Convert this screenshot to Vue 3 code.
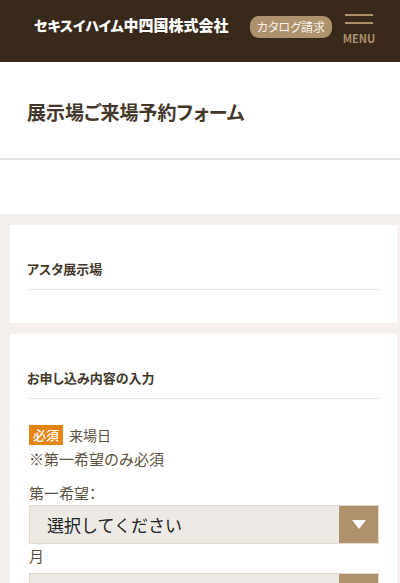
<script setup>
import { ref } from 'vue'

const month = ref('')
const day = ref('')
const months = Array.from({ length: 12 }, (_, i) => i + 1)
const days = Array.from({ length: 31 }, (_, i) => i + 1)
</script>

<template>
  <div class="page">
    <header class="header">
      <a class="logo" href="#"><span class="brand">セキスイハイム</span>中四国株式会社</a>
      <nav class="actions">
        <a class="catalog" href="#">カタログ請求</a>
        <button class="menu" type="button">
          <span class="bar"></span>
          <span class="bar"></span>
          <span class="menu-text">MENU</span>
        </button>
      </nav>
    </header>

    <div class="title">
      <h1>展示場ご来場予約フォーム</h1>
    </div>

    <main class="content">
      <section class="card">
        <h2>アスタ展示場</h2>
      </section>

      <section class="card">
        <h2>お申し込み内容の入力</h2>
        <form class="form">
          <p class="field-name"><span class="required">必須</span>来場日</p>
          <p class="note">※第一希望のみ必須</p>
          <label class="choice" for="month">第一希望：</label>
          <div class="select">
            <select id="month" v-model="month">
              <option value="">選択してください</option>
              <option v-for="m in months" :key="m" :value="m">{{ m }}</option>
            </select>
            <span class="arrow"><svg viewBox="0 0 14 9"><path d="M0 0h14L7 9z" /></svg></span>
          </div>
          <label class="unit" for="month">月</label>
          <div class="select">
            <select id="day" v-model="day" aria-label="日">
              <option value="">選択してください</option>
              <option v-for="d in days" :key="d" :value="d">{{ d }}</option>
            </select>
            <span class="arrow"><svg viewBox="0 0 14 9"><path d="M0 0h14L7 9z" /></svg></span>
          </div>
        </form>
      </section>
    </main>
  </div>
</template>

<style>
body {
  margin: 0;
  background: #f5f0ee;
}
html {
  scrollbar-width: none;
}
</style>

<style scoped>
.page {
  font-family: "Noto Sans CJK JP", sans-serif;
  font-feature-settings: "palt";
  color: #5d5140;
}
.header {
  display: flex;
  justify-content: space-between;
  box-sizing: border-box;
  height: 62px;
  padding: 12px 26px 0 34px;
  background: #38291b;
}
.logo {
  color: #fff;
  font-size: 15px;
  font-weight: 900;
  line-height: 26px;
  text-decoration: none;
  white-space: nowrap;
}
.brand {
  font-size: 14px;
}
.actions {
  display: flex;
  align-items: flex-start;
  gap: 12px;
}
.catalog {
  width: 82px;
  margin-top: 4px;
  border-radius: 9px;
  background: #ae916d;
  color: #f7f1e8;
  font-size: 12px;
  line-height: 22px;
  text-align: center;
  text-decoration: none;
  white-space: nowrap;
}
.menu {
  display: flex;
  flex-direction: column;
  align-items: center;
  gap: 6px;
  width: 30px;
  margin: 0;
  padding: 2px 0 0;
  border: 0;
  background: none;
  color: #ae916d;
}
.bar {
  width: 28px;
  height: 2px;
  background: #ae916d;
}
.menu-text {
  font-family: "Noto Sans CJK JP", sans-serif;
  font-size: 11px;
  font-weight: 700;
  line-height: 16px;
}
.title {
  padding: 36px 27px 32px;
  border-bottom: 2px solid #e8e2de;
  background: #fff;
}
h1 {
  margin: 0;
  color: #44372a;
  font-size: 19px;
  font-weight: 700;
  line-height: 28px;
}
.content {
  display: flex;
  flex-direction: column;
  gap: 11px;
  padding: 11px 3px 0 10px;
  border-top: 54px solid #fff;
  background: #f5f0ee;
}
.card {
  padding: 33px 16px 33px 17px;
  background: #fff;
}
h2 {
  margin: 0;
  padding-bottom: 9px;
  border-bottom: 1px solid #e8e2dc;
  color: #44372a;
  font-size: 13px;
  font-weight: 700;
  line-height: 22px;
}
.form {
  padding: 24px 2px 0;
  font-size: 15px;
  line-height: 24px;
}
.field-name,
.note {
  margin: 0;
}
.field-name {
  display: flex;
  align-items: center;
  gap: 6px;
  font-size: 14px;
}
.note {
  font-feature-settings: normal;
}
.required {
  padding: 0 4px;
  background: #e5830f;
  color: #fff;
  font-size: 13px;
  font-weight: 500;
  line-height: 20px;
}
.choice,
.unit {
  display: block;
}
.choice {
  margin-top: 10px;
}
.unit {
  margin-bottom: 5px;
}
.select {
  position: relative;
  display: flex;
}
select {
  width: 100%;
  height: 39px;
  padding: 0 56px 0 17px;
  border: 1px solid #e2d9cc;
  border-radius: 0;
  background: #edeae6;
  color: #222;
  font-family: inherit;
  font-feature-settings: normal;
  font-size: 17px;
  appearance: none;
}
.arrow {
  position: absolute;
  inset: 1px 1px 1px auto;
  display: flex;
  align-items: center;
  justify-content: center;
  width: 39px;
  background: #ae916d;
  pointer-events: none;
}
.arrow svg {
  width: 14px;
  height: 9px;
  fill: #fff;
}
</style>
